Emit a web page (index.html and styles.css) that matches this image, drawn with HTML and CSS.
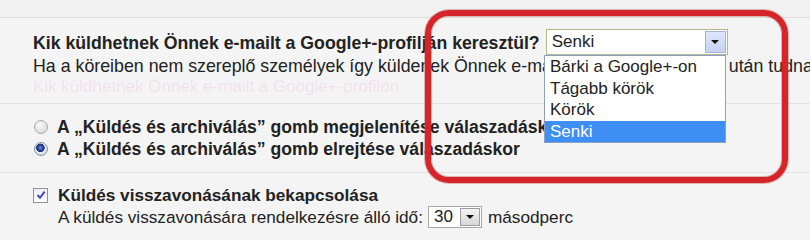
FILE: index.html
```html
<!DOCTYPE html>
<html lang="hu">
<head>
<meta charset="utf-8">
<title>Beállítások</title>
<link rel="stylesheet" href="styles.css">
</head>
<body>
<div class="page">
  <div class="topbar"></div>

  <section class="sec sec-gplus">
    <div class="q-row">
      <span class="q-text">Kik küldhetnek Önnek e-mailt a Google+-profilján keresztül?</span>
      <div class="select select-big">
        <span class="select-value">Senki</span>
        <span class="select-btn select-btn-blue"><span class="tri"></span></span>
      </div>
    </div>
    <div class="desc">Ha a köreiben nem szereplő személyek így küldenek Önnek e-mailt, csak az ön kérésre után tudnak e-mailt küldeni.</div>
    <div class="ghost">Kik küldhetnek Önnek e-mailt a Google+-profilon</div>
  </section>

  <section class="sec sec-radio">
    <label class="opt">
      <span class="radio"></span>
      <span class="opt-text">A „Küldés és archiválás” gomb megjelenítése válaszadáskor</span>
    </label>
    <label class="opt">
      <span class="radio radio-on"></span>
      <span class="opt-text">A „Küldés és archiválás” gomb elrejtése válaszadáskor</span>
    </label>
  </section>

  <section class="sec sec-undo">
    <label class="chk-row">
      <span class="checkbox">
        <svg viewBox="0 0 10 10" width="10" height="10"><path d="M1.5 5 L4 7.8 L8.6 1.6" fill="none" stroke="#3a47c4" stroke-width="1.9"/></svg>
      </span>
      <span class="chk-text">Küldés visszavonásának bekapcsolása</span>
    </label>
    <div class="undo-row">
      <span>A küldés visszavonására rendelkezésre álló idő:</span>
      <div class="select select-small">
        <span class="select-value">30</span>
        <span class="select-btn select-btn-gray"><span class="tri"></span></span>
      </div>
      <span>másodperc</span>
    </div>
  </section>

  <ul class="dropdown">
    <li>Bárki a Google+-on</li>
    <li>Tágabb körök</li>
    <li>Körök</li>
    <li class="active">Senki</li>
  </ul>

  <div class="highlight"></div>
</div>
</body>
</html>
```

FILE: styles.css
```css
html, body {
  margin: 0;
  padding: 0;
}
body {
  background: #f4f4f4;
  font-family: "Liberation Sans", Arial, sans-serif;
  font-size: 17.6px;
  color: #222;
  overflow: hidden;
}
.page {
  position: relative;
  width: 810px;
  height: 233px;
  overflow: hidden;
}
.topbar {
  height: 17px;
  background: #f1f1f1;
  border-bottom: 1px solid #dedede;
}
.sec {
  border-bottom: 1px solid #e2e2e2;
}
.sec-gplus {
  height: 74px;
  padding: 11px 0 0 33px;
}
.q-row {
  display: flex;
  align-items: flex-start;
  height: 26px;
}
.q-text {
  font-weight: bold;
  font-size: 17.7px;
  line-height: 20px;
  margin-top: 4px;
  margin-right: 6px;
  white-space: nowrap;
}
.select {
  position: relative;
  display: flex;
  align-items: center;
  background: #fff;
  box-sizing: border-box;
  flex: none;
}
.select-big {
  width: 182px;
  height: 26px;
  border: 1px solid #b8b78c;
  font-size: 17px;
}
.select-value {
  padding-left: 5px;
  flex: 1;
}
.select-btn {
  display: flex;
  align-items: center;
  justify-content: center;
  box-sizing: border-box;
}
.select-btn-blue {
  width: 21px;
  height: 22px;
  margin-right: 1px;
  border: 1px solid #a3b4d8;
  background: linear-gradient(#dde6fb, #c4d3f4);
}
.tri {
  width: 0;
  height: 0;
  border-left: 4px solid transparent;
  border-right: 4px solid transparent;
  border-top: 4px solid #111;
}
.desc {
  margin-top: 1px;
  font-size: 17.8px;
  line-height: 20px;
  white-space: nowrap;
}
.ghost {
  margin-top: 2px;
  line-height: 18px;
  color: rgba(236, 150, 220, 0.22);
  white-space: nowrap;
  font-size: 17px;
}
.sec-radio {
  height: 56px;
  padding: 12px 0 0 34px;
}
.opt {
  display: flex;
  align-items: center;
  height: 22px;
  font-weight: bold;
  white-space: nowrap;
}
.radio {
  width: 14px;
  height: 14px;
  box-sizing: border-box;
  border-radius: 50%;
  border: 1px solid #a9a9a9;
  background: radial-gradient(circle at 40% 35%, #fafafa 0, #e2e2e2 60%, #cfcfcf 100%);
  margin-right: 9px;
  flex: none;
}
.radio-on {
  border-color: #7f93a8;
  background:
    radial-gradient(circle at 45% 40%, #6f8ee0 0, #23398f 3px, #1d2f7a 4px, transparent 4.5px),
    radial-gradient(circle at 40% 35%, #ffffff 0, #dfe8ef 60%, #b5c4d2 100%);
}
.sec-undo {
  border-bottom: none;
  padding: 11px 0 0 33px;
  font-size: 17.2px;
}
.chk-row {
  display: flex;
  align-items: center;
  height: 22px;
}
.checkbox {
  width: 15px;
  height: 15px;
  box-sizing: border-box;
  border: 1px solid #8f8f9d;
  background: linear-gradient(#eeeef4, #fdfdfd);
  display: flex;
  align-items: center;
  justify-content: center;
  margin-right: 10px;
  flex: none;
}
.chk-text {
  font-weight: bold;
}
.undo-row {
  display: flex;
  align-items: center;
  height: 22px;
  padding-left: 25px;
  white-space: nowrap;
}
.select-small {
  width: 54px;
  height: 22px;
  margin: 0 6px 0 5px;
  border: 1px solid #a8a8a8;
  font-size: 17px;
}
.select-btn-gray {
  width: 20px;
  height: 18px;
  margin-right: 1px;
  border: 1px solid #9d9d9d;
  background: linear-gradient(#f4f4f4, #d6d6d6);
}
.dropdown {
  position: absolute;
  left: 544px;
  top: 55px;
  width: 182px;
  margin: 0;
  padding: 0;
  list-style: none;
  background: #fff;
  border: 1px solid #8aa0c0;
  box-sizing: border-box;
  font-size: 17px;
}
.dropdown li {
  height: 21.5px;
  line-height: 21.5px;
  padding-left: 5px;
  color: #222;
}
.dropdown li.active {
  background: #3f8ef3;
  color: #fff;
}
.highlight {
  position: absolute;
  left: 425px;
  top: 10px;
  width: 363px;
  height: 173px;
  box-sizing: border-box;
  border: 6px solid #d5252b;
  border-radius: 24px;
  box-shadow: 0 0 0 1px rgba(170, 70, 50, 0.35), inset 0 0 0 1px rgba(170, 70, 50, 0.35);
}
```
